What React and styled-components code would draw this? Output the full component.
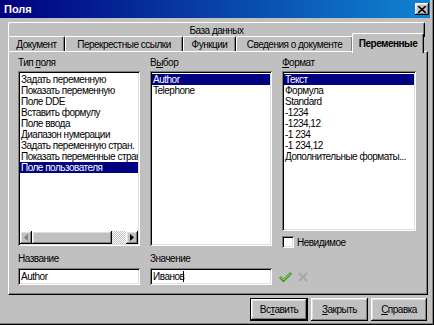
import { createGlobalStyle, styled } from 'styled-components';

const GlobalStyle = createGlobalStyle`
  body {
    margin: 0;
    font-family: "Liberation Sans", Arial, sans-serif;
    font-size: 10px;
    letter-spacing: -0.5px;
  }
`;

const raised = `
  box-shadow: inset -1px -1px #000, inset 1px 1px #fff,
    inset -2px -2px #808080, inset 2px 2px #dfdfdf;
`;

const sunken = `
  box-shadow: inset 1px 1px #808080, inset -1px -1px #fff,
    inset 2px 2px #000, inset -2px -2px #dfdfdf;
`;

const fieldTypes = [
  'Задать переменную',
  'Показать переменную',
  'Поле DDE',
  'Вставить формулу',
  'Поле ввода',
  'Диапазон нумерации',
  'Задать переменную стран.',
  'Показать переменные стран',
  'Поле пользователя',
];

const choices = ['Author', 'Telephone'];

const formats = [
  'Текст',
  'Формула',
  'Standard',
  '-1234',
  '-1234,12',
  '-1 234',
  '-1 234,12',
  'Дополнительные форматы...',
];

const tabs = [
  { label: 'Документ', width: 57 },
  { label: 'Перекрестные ссылки', width: 118 },
  { label: 'Функции', width: 53 },
  { label: 'Сведения о документе', width: 117 },
  { label: 'Переменные', width: 72, active: true },
];

const Dialog = () => {
  return (
    <Window>
      <GlobalStyle />
      <TitleBar>
        <span>Поля</span>
        <CloseButton>
          <svg width='8' height='7' viewBox='0 0 8 7'>
            <path d='M0 0 L8 7 M8 0 L0 7' stroke='#000' strokeWidth='1.6' />
          </svg>
        </CloseButton>
      </TitleBar>
      <Body>
        <BackRow>
          <Tab $width={417}>База данных</Tab>
        </BackRow>
        <TabRow>
          {tabs.map((t) => (
            <Tab key={t.label} $width={t.width} $active={t.active}>
              {t.label}
            </Tab>
          ))}
        </TabRow>
        <Panel>
          <Label>
            Тип <u>п</u>оля
          </Label>
          <Label>
            В<u>ы</u>бор
          </Label>
          <Label>
            <u>Ф</u>ормат
          </Label>

          <ListBox $height={175}>
            <Items>
              {fieldTypes.map((f, i) => (
                <Item key={f} $selected={i === fieldTypes.length - 1}>
                  {f}
                </Item>
              ))}
            </Items>
            <HScroll>
              <Arrow>
                <svg width='4' height='7' viewBox='0 0 4 7'>
                  <path d='M4 0 L0 3.5 L4 7 Z' fill='#808080' />
                </svg>
              </Arrow>
              <Thumb />
              <Track />
              <Arrow>
                <svg width='4' height='7' viewBox='0 0 4 7'>
                  <path d='M0 0 L4 3.5 L0 7 Z' fill='#000' />
                </svg>
              </Arrow>
            </HScroll>
          </ListBox>

          <ListBox $height={175}>
            <Items>
              {choices.map((c, i) => (
                <Item key={c} $selected={i === 0}>
                  {c}
                </Item>
              ))}
            </Items>
          </ListBox>

          <FormatColumn>
            <ListBox $height={160}>
              <Items>
                {formats.map((f, i) => (
                  <Item key={f} $selected={i === 0}>
                    {f}
                  </Item>
                ))}
              </Items>
            </ListBox>
            <CheckRow>
              <CheckBox />
              <span>
                Неви<u>д</u>имое
              </span>
            </CheckRow>
          </FormatColumn>

          <Label $gap>Название</Label>
          <Label $gap>Значение</Label>
          <span />

          <Input>Author</Input>
          <Input>
            Иванов<Caret />
          </Input>
          <Actions>
            <svg width='13' height='10' viewBox='0 0 13 10'>
              <path
                d='M1 5 L4.5 8.5 L12 1'
                fill='none'
                stroke='#2f8f1f'
                strokeWidth='2.6'
              />
              <path
                d='M1.5 5 L4.5 8 L11.5 1.2'
                fill='none'
                stroke='#b8f060'
                strokeWidth='1'
              />
            </svg>
            <svg width='10' height='10' viewBox='0 0 10 10'>
              <path
                d='M1 1 L9 9 M9 1 L1 9'
                stroke='#a8a8a8'
                strokeWidth='2.4'
              />
            </svg>
          </Actions>
        </Panel>
        <ButtonRow>
          <Button $default $width={58}>
            Вс<u>т</u>авить
          </Button>
          <Button $width={57}>
            <u>З</u>акрыть
          </Button>
          <Button $width={56}>
            <u>С</u>правка
          </Button>
        </ButtonRow>
      </Body>
    </Window>
  );
};

export default Dialog;

const Window = styled.div`
  width: 434px;
  height: 325px;
  box-sizing: border-box;
  padding: 0 4px 3px 0;
  background: #c0c0c0;
  box-shadow: inset -1px -1px #000, inset -2px -2px #808080;
  display: flex;
  flex-direction: column;
  overflow: hidden;
`;

const TitleBar = styled.div`
  height: 18px;
  display: flex;
  align-items: center;
  justify-content: space-between;
  padding: 0 1px 0 4px;
  background: linear-gradient(to right, #000080, #1084d0);
  color: #fff;
  font-weight: bold;
  font-size: 11px;
  letter-spacing: 0;
`;

const CloseButton = styled.div`
  width: 14px;
  height: 12px;
  display: flex;
  align-items: center;
  justify-content: center;
  background: #c0c0c0;
  ${raised}
`;

const Body = styled.div`
  display: flex;
  flex-direction: column;
  padding: 4px 0 0 8px;
`;

const BackRow = styled.div`
  display: flex;
  height: 15px;
`;

const TabRow = styled.div`
  display: flex;
  align-items: flex-end;
  height: 14px;
`;

const Tab = styled.div`
  width: ${(p) => p.$width}px;
  height: ${(p) => (p.$active ? 20 : 15)}px;
  box-sizing: border-box;
  margin: ${(p) => (p.$active ? '0 -2px -2px -1px' : '0')};
  position: ${(p) => (p.$active ? 'relative' : 'static')};
  z-index: ${(p) => (p.$active ? 1 : 'auto')};
  display: flex;
  align-items: ${(p) => (p.$active ? 'flex-start' : 'center')};
  padding-top: ${(p) => (p.$active ? '4px' : '0')};
  justify-content: center;
  background: #c0c0c0;
  border-top: 1px solid #fff;
  border-left: 1px solid #fff;
  border-right: 1px solid #000;
  border-radius: 2px 2px 0 0;
  box-shadow: inset -1px 0 #808080;
  font-weight: ${(p) => (p.$active ? 'bold' : 'normal')};
  white-space: nowrap;
  color: #000;
`;

const Panel = styled.div`
  width: 420px;
  height: 244px;
  box-sizing: border-box;
  border: 1px solid;
  border-color: #fff #000 #000 #fff;
  box-shadow: inset -1px -1px #808080;
  padding: 4px 0 0 9px;
  display: grid;
  grid-template-columns: 122px 122px 134px;
  grid-template-rows: 15px 175px 22px 17px;
  column-gap: 10px;
  align-items: start;
`;

const Label = styled.div`
  height: 13px;
  line-height: 13px;
  align-self: ${(p) => (p.$gap ? 'end' : 'start')};
  margin-bottom: ${(p) => (p.$gap ? '3px' : '0')};
  white-space: nowrap;
`;

const ListBox = styled.div`
  height: ${(p) => p.$height}px;
  box-sizing: border-box;
  padding: 2px;
  background: #fff;
  ${sunken}
  display: flex;
  flex-direction: column;
`;

const Items = styled.div`
  flex: 1;
  overflow: hidden;
  padding-top: 1px;
`;

const Item = styled.div`
  height: 11px;
  line-height: 11px;
  padding-left: 1px;
  white-space: nowrap;
  overflow: hidden;
  background: ${(p) => (p.$selected ? '#000080' : 'transparent')};
  color: ${(p) => (p.$selected ? '#fff' : '#000')};
`;

const HScroll = styled.div`
  display: flex;
  height: 13px;
`;

const Arrow = styled.div`
  width: 12px;
  display: flex;
  align-items: center;
  justify-content: center;
  background: #c0c0c0;
  ${raised}
`;

const Thumb = styled.div`
  width: 80px;
  background: #c0c0c0;
  ${raised}
`;

const Track = styled.div`
  flex: 1;
  background: repeating-conic-gradient(#fff 0 25%, #c0c0c0 0 50%) 0 0 / 2px
    2px;
`;

const FormatColumn = styled.div`
  display: flex;
  flex-direction: column;
`;

const CheckRow = styled.div`
  display: flex;
  align-items: center;
  gap: 3px;
  margin-top: 5px;
  height: 12px;
`;

const CheckBox = styled.div`
  width: 12px;
  height: 12px;
  box-sizing: border-box;
  background: #fff;
  ${sunken}
`;

const Input = styled.div`
  height: 17px;
  box-sizing: border-box;
  padding: 0 3px;
  display: flex;
  align-items: center;
  background: #fff;
  ${sunken}
  white-space: nowrap;
`;

const Caret = styled.span`
  width: 1px;
  height: 11px;
  margin-left: -1px;
  background: #000;
`;

const Actions = styled.div`
  display: flex;
  align-items: center;
  gap: 6px;
  height: 17px;
  margin-left: -3px;
`;

const ButtonRow = styled.div`
  width: 420px;
  display: flex;
  justify-content: flex-end;
  gap: 3px;
  margin-top: 3px;
  padding-right: 1px;
  box-sizing: border-box;
`;

const Button = styled.div`
  width: ${(p) => p.$width}px;
  height: 23px;
  box-sizing: border-box;
  display: flex;
  align-items: center;
  justify-content: center;
  background: #c0c0c0;
  border: ${(p) => (p.$default ? '1px solid #000' : 'none')};
  ${raised}
  color: #000;
`;
